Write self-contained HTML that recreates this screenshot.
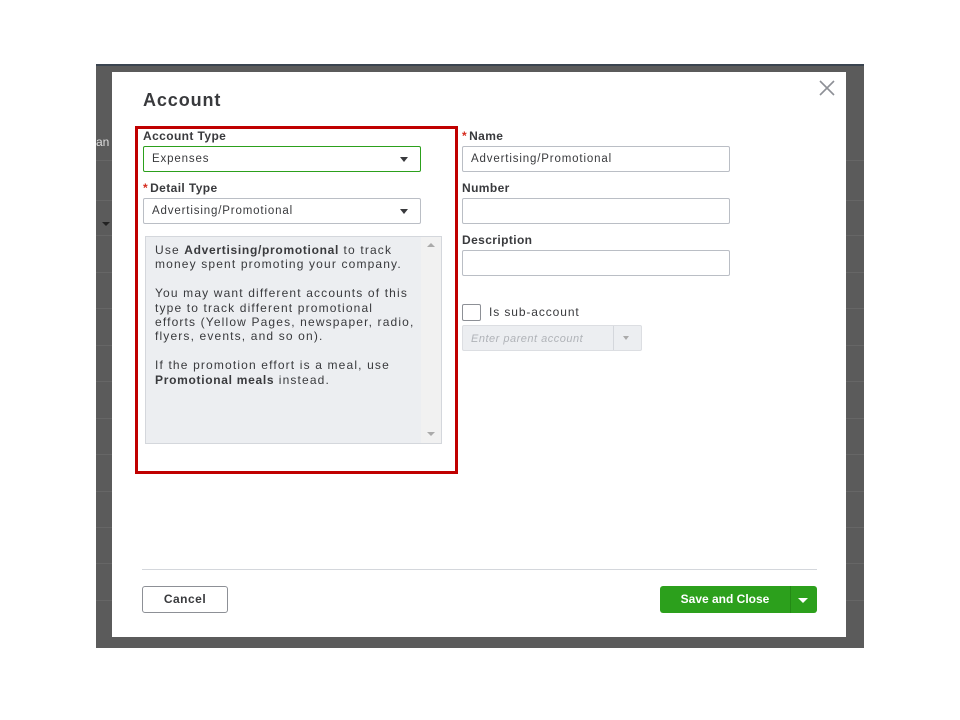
<!DOCTYPE html>
<html><head><style>
*{box-sizing:border-box;margin:0;padding:0}
body{width:960px;height:720px;background:#fff;position:relative;font-family:"Liberation Sans",sans-serif;color:#393a3d;overflow:hidden}
.a{position:absolute}
.bg{left:96px;top:64px;width:768px;height:584px;background:#5b5b5b;border-top:2px solid #3a4450}
.hl{left:96px;width:768px;height:1px;background:#666}
.modal{left:112px;top:72px;width:734px;height:565px;background:#fff}
.lbl{font-size:12px;font-weight:bold;color:#393a3d;letter-spacing:0.4px}
.in{border:1px solid #babec5;border-radius:2px;background:#fff;height:26px;font-size:11.5px;padding:6px 8px;color:#393a3d;letter-spacing:0.85px}
.car{position:absolute;right:12px;top:10px;width:0;height:0;border-left:4px solid transparent;border-right:4px solid transparent;border-top:5px solid #393a3d}
.star{color:#d52b1e;margin-right:2px}
</style></head><body>
<div class="a bg"></div>
<div class="a hl" style="top:160px"></div>
<div class="a hl" style="top:200px"></div>
<div class="a hl" style="top:235px"></div>
<div class="a hl" style="top:272px"></div>
<div class="a hl" style="top:308px"></div>
<div class="a hl" style="top:345px"></div>
<div class="a hl" style="top:381px"></div>
<div class="a hl" style="top:418px"></div>
<div class="a hl" style="top:454px"></div>
<div class="a hl" style="top:491px"></div>
<div class="a hl" style="top:527px"></div>
<div class="a hl" style="top:563px"></div>
<div class="a hl" style="top:600px"></div>
<div class="a" style="left:96px;top:135px;font-size:12px;color:#ddd">an</div>
<div class="a" style="left:102px;top:222px;border-left:4px solid transparent;border-right:4px solid transparent;border-top:4px solid #222"></div>
<div class="a modal"></div>
<svg class="a" style="left:818px;top:80px" width="18" height="16"><path d="M2 1L16 15M16 1L2 15" stroke="#8d9096" stroke-width="1.6"/></svg>
<div class="a" style="left:143px;top:90px;font-size:18px;font-weight:bold;color:#393a3d;letter-spacing:0.9px">Account</div>
<div class="a" style="left:135px;top:126px;width:323px;height:348px;border:3px solid #c00000"></div>
<div class="a lbl" style="left:143px;top:129px">Account Type</div>
<div class="a in" style="left:143px;top:146px;width:278px;border-color:#2ca01c;">Expenses<span class="car"></span></div>
<div class="a lbl" style="left:143px;top:181px"><span class="star">*</span>Detail Type</div>
<div class="a in" style="left:143px;top:198px;width:278px">Advertising/Promotional<span class="car"></span></div>
<div class="a" style="left:145px;top:236px;width:297px;height:208px;background:#eceef1;border:1px solid #d4d7dc"></div>
<div class="a" style="left:421px;top:237px;width:20px;height:206px;background:#f1f1f1"></div>
<div class="a" style="left:427px;top:243px;border-left:4px solid transparent;border-right:4px solid transparent;border-bottom:4px solid #aaa"></div>
<div class="a" style="left:427px;top:432px;border-left:4px solid transparent;border-right:4px solid transparent;border-top:4px solid #aaa"></div>
<div class="a" style="left:155px;top:243px;width:270px;font-size:12px;line-height:14.4px;color:#393a3d;letter-spacing:1.15px;white-space:nowrap">Use <b style="letter-spacing:0.7px">Advertising/promotional</b> to track<br>money spent promoting your company.<br><br>You may want different accounts of this<br>type to track different promotional<br>efforts (Yellow Pages, newspaper, radio,<br>flyers, events, and so on).<br><br>If the promotion effort is a meal, use<br><b style="letter-spacing:0.7px">Promotional meals</b> instead.</div>
<div class="a lbl" style="left:462px;top:129px"><span class="star">*</span>Name</div>
<div class="a in" style="left:462px;top:146px;width:268px">Advertising/Promotional</div>
<div class="a lbl" style="left:462px;top:181px">Number</div>
<div class="a in" style="left:462px;top:198px;width:268px"></div>
<div class="a lbl" style="left:462px;top:233px">Description</div>
<div class="a in" style="left:462px;top:250px;width:268px"></div>
<div class="a" style="left:462px;top:304px;width:19px;height:17px;border:1px solid #8d9096;border-radius:2px"></div>
<div class="a" style="left:489px;top:305px;font-size:12px;letter-spacing:0.9px">Is sub-account</div>
<div class="a" style="left:462px;top:325px;width:180px;height:26px;background:#eceef1;border:1px solid #dcdee2;border-radius:2px;font-size:11px;font-style:italic;color:#b0b3b8;padding:7px 8px;letter-spacing:0.5px">Enter parent account</div>
<div class="a" style="left:613px;top:326px;width:1px;height:24px;background:#d4d7dc"></div>
<div class="a" style="left:623px;top:336px;border-left:3px solid transparent;border-right:3px solid transparent;border-top:4px solid #aaa"></div>
<div class="a" style="left:142px;top:569px;width:675px;height:1px;background:#d4d7dc"></div>
<div class="a" style="left:142px;top:586px;width:86px;height:27px;border:1px solid #8d9096;border-radius:3px;font-size:12px;font-weight:bold;color:#393a3d;text-align:center;line-height:25px;letter-spacing:0.5px">Cancel</div>
<div class="a" style="left:660px;top:586px;width:157px;height:27px;background:#2ca01c;border-radius:3px"></div>
<div class="a" style="left:790px;top:586px;width:1px;height:27px;background:#238a15"></div>
<div class="a" style="left:660px;top:586px;width:130px;height:27px;font-size:12px;font-weight:bold;color:#fff;text-align:center;line-height:27px">Save and Close</div>
<div class="a" style="left:798px;top:598px;border-left:5px solid transparent;border-right:5px solid transparent;border-top:5px solid #fff"></div>
</body></html>
